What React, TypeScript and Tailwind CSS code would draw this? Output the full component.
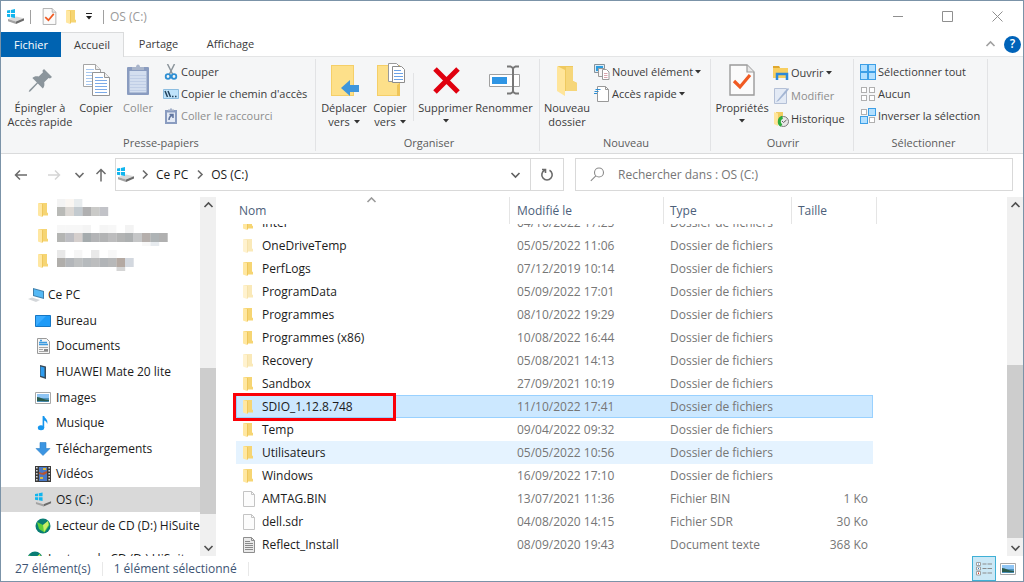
import type { ReactNode } from "react";
import clsx from "clsx";

/* ---------- icons ---------- */

function DriveIcon() {
  return (
    <svg width="18" height="16" viewBox="0 0 18 16">
      <path d="M1 10l8-2.500 8 1.700-8 3.300z" fill="#d9d9d9" />
      <path d="M9 12.500l8-3.300v2.300l-8 3.500z" fill="#6b6b6b" />
      <path d="M1 10l8 2.500V15l-8-2.700z" fill="#a3a3a3" />
      <path d="M0 1.600l3.200-.6v3.100H0zM4 .9L8 0v4.100H4zM0 5h3.200v3.200L0 7.700zM4 5h4v4l-4-.7z" fill="#12b5ee" />
    </svg>
  );
}

function FolderIcon({ faded = false }: { faded?: boolean }) {
  return (
    <svg width="12" height="16" viewBox="0 0 12 16" className={clsx("shrink-0", faded && "opacity-50")}>
      <path d="M2 1h8v9.500l1 .5v2.500H2z" fill="#f6d573" />
      <path d="M1 1l4 1v13l-4-1.500z" fill="#ffe7a1" />
      <path d="M5 2h1v12l-1 1z" fill="#efc75c" />
    </svg>
  );
}

function PageIcon({ lines = false }: { lines?: boolean }) {
  return (
    <svg width="14" height="16" viewBox="0 0 14 16" className="shrink-0">
      <path d="M1.5.5h8l3 3v12h-11z" fill={lines ? "#e9e9e9" : "#fcfcfc"} stroke={lines ? "#8e8e8e" : "#c4c4c4"} />
      <path d="M9.5.5v3h3" fill="none" stroke={lines ? "#8e8e8e" : "#c4c4c4"} />
      {lines && <path d="M3 4.500h5M3 6.500h8M3 8.500h8M3 10.500h8M3 12.500h8" stroke="#8a8a8a" />}
    </svg>
  );
}

function CheckPageIcon({ size = 16 }: { size?: number }) {
  return (
    <svg width={size} height={size} viewBox="0 0 32 32">
      <path d="M4 1h17l7 7v23H4z" fill="#fbfbfb" stroke="#9b9b9b" strokeWidth="1.4" />
      <path d="M21 1v7h7" fill="#e8e8e8" stroke="#9b9b9b" strokeWidth="1.2" />
      <path d="M8 17l6 6 10-12" fill="none" stroke="#f05a22" strokeWidth="3.2" />
    </svg>
  );
}

function PinIcon() {
  return (
    <svg width="32" height="32" viewBox="0 0 32 32" fill="#8b959c">
      <path d="M20 5l8 8-2 1.400-1.400-.5-4.400 4.300c.5 2.600.2 4.600-1.400 6.200l-5-4.900L6.500 27.200l-1.800.7.7-1.900 7.500-7.500-4.500-4.600c1.600-1.500 3.800-1.900 6.300-1.300L19 8.300l-.6-1.500z" />
    </svg>
  );
}

function CopyPagesIcon() {
  return (
    <svg width="32" height="34" viewBox="0 0 32 34">
      <path d="M3.5 1.500h12l5 5v17h-17z" fill="#fff" stroke="#a5a5a5" />
      <path d="M15.500 1.500v5h5" fill="#eee" stroke="#a5a5a5" />
      <path d="M6 6.500h8M6 9.500h8M6 12.500h6M6 15.500h6M6 18.500h6M6 21.500h6" stroke="#a8c8ef" />
      <path d="M12.500 9.500h12l5 5v18h-17z" fill="#fff" stroke="#959595" />
      <path d="M24.500 9.500v5h5" fill="#eee" stroke="#959595" />
      <path d="M15 14.500h8M15 17.500h12M15 20.500h12M15 23.500h12M15 26.500h12M15 29.500h12" stroke="#7cabe8" />
    </svg>
  );
}

function ClipboardIcon() {
  return (
    <svg width="26" height="34" viewBox="0 0 26 34">
      <rect x="2" y="4" width="22" height="28" rx="1" fill="#8a9cc0" />
      <path d="M4.500 8h17v21.500h-17z" fill="#d3deef" />
      <path d="M5 12.500h16M5 15.500h16M5 18.500h16M5 21.500h16M5 24.500h16M5 27.500h16" stroke="#c0cee6" />
      <path d="M7 7V4h4c0-3.500 4-3.500 4 0h4v3z" fill="#a9b5cb" />
    </svg>
  );
}

function ScissorsIcon() {
  return (
    <svg width="16" height="16" viewBox="0 0 16 16" fill="none">
      <path d="M4.500 0l5 10M11.500 0l-5 10" stroke="#8c959c" strokeWidth="1.5" />
      <circle cx="5" cy="12.500" r="2.300" stroke="#2f8fd3" strokeWidth="1.800" />
      <circle cx="11" cy="12.500" r="2.300" stroke="#2f8fd3" strokeWidth="1.800" />
    </svg>
  );
}

function PathIcon() {
  return (
    <svg width="16" height="16" viewBox="0 0 16 16">
      <path d="M.5 3.500h15v9H.5z" fill="#bfe3fb" stroke="#8cbde0" />
      <path d="M2 5l2.500 6M5 5l2.500 6" stroke="#23425c" strokeWidth="1.5" />
      <path d="M9 10.500h1.500M12 10.500h1.500" stroke="#23425c" strokeWidth="1.5" />
    </svg>
  );
}

function PasteLinkIcon() {
  return (
    <svg width="16" height="16" viewBox="0 0 16 16">
      <path d="M2 2h12v14H2z" fill="#8a9cc0" />
      <path d="M4 4.500h8V14H4z" fill="#e4eaf5" />
      <path d="M5 3V1.500h2C7-.2 9-.2 9 1.500h2V3z" fill="#a3afc8" />
      <path d="M6 12c0-3 1-4 3.500-5M6.500 6.500H10V10" fill="none" stroke="#60759f" strokeWidth="1.5" />
    </svg>
  );
}

function BigFolder() {
  return (
    <>
      <path d="M3 2h23v31H3z" fill="#f5cf68" />
      <path d="M4 3h21v29H4z" fill="#fde08a" />
    </>
  );
}

function MoveToIcon() {
  return (
    <svg width="32" height="34" viewBox="0 0 32 34">
      <BigFolder />
      <path d="M13 25l9-8v5h9v7h-9v4z" fill="#3f96dc" />
    </svg>
  );
}

function CopyToIcon() {
  return (
    <svg width="32" height="34" viewBox="0 0 32 34">
      <BigFolder />
      <path d="M23 22l3-2v13h-3z" fill="#efc559" />
      <path d="M14.500.5h8l3 3v15h-11z" fill="#fff" stroke="#9a9a9a" />
      <path d="M18.500 3.500h9l3 3v13h-12z" fill="#fff" stroke="#8d8d8d" />
      <path d="M20 7.500h7M20 10.500h9M20 13.500h9M20 16.500h9" stroke="#6ba2e6" />
    </svg>
  );
}

function DeleteIcon() {
  return (
    <svg width="32" height="32" viewBox="0 0 32 32">
      <path d="M5 5l23 23M28 5L5 28" stroke="#e0000f" strokeWidth="5" />
    </svg>
  );
}

function RenameIcon() {
  return (
    <svg width="34" height="32" viewBox="0 0 34 32" fill="none">
      <path d="M2.500 10.500h30v12h-30z" fill="#fff" stroke="#a0a0a0" />
      <path d="M5 13h15v7H5z" fill="#2f95e4" />
      <path d="M20 2.500h3.500L26 4l2.500-1.500H32M26 4v24M20 29.500h3.500L26 28l2.500 1.500H32" stroke="#777" strokeWidth="2" />
    </svg>
  );
}

function NewFolderIcon() {
  return (
    <svg width="26" height="34" viewBox="0 0 26 34">
      <path d="M4 3h15v15l4 2v8H8z" fill="#efc95f" />
      <path d="M12 4h7v14l4 2v8H12z" fill="#f6d67a" />
      <path d="M3 3l8 4v26l-8-5z" fill="#ffe59a" />
    </svg>
  );
}

function NewItemIcon() {
  return (
    <svg width="16" height="16" viewBox="0 0 16 16">
      <path d="M.5.5h10v8H.5z" fill="#d9edfb" stroke="#87929a" />
      <path d="M2 2h7v5H2z" fill="#2d9ddf" />
      <path d="M4.500 4.500h6v8h-6z" fill="#f6f6f6" stroke="#9a9a9a" />
      <path d="M8.500 5.500h4L15 8v7.500H8.500z" fill="#fff" stroke="#9a9a9a" />
      <path d="M10 9.500h3.500M10 11.500h3.500M10 13.500h3.500" stroke="#d9a5ae" />
    </svg>
  );
}

function EasyAccessIcon() {
  return (
    <svg width="16" height="16" viewBox="0 0 16 16">
      <path d="M3.500.5h8l3 3v12h-11z" fill="#fff" stroke="#999" />
      <path d="M11.500.5v3h3" fill="none" stroke="#999" />
      <path d="M1.500 3.500h5M.5 5.500h4M0 7.500h3" stroke="#2f8fd3" strokeWidth="1.2" />
    </svg>
  );
}

function OpenIcon() {
  return (
    <svg width="16" height="16" viewBox="0 0 16 16">
      <path d="M0 1h6l1 2h8v10H0z" fill="#f8cf61" />
      <path d="M0 1h6l1 2H0z" fill="#e0a82e" />
      <path d="M4 15V9h10v6" fill="none" stroke="#2d89d8" strokeWidth="2.5" />
    </svg>
  );
}

function EditIcon() {
  return (
    <svg width="16" height="16" viewBox="0 0 16 16">
      <path d="M1.500.5h12v15h-12z" fill="#e3eaf5" stroke="#b4c0d6" />
      <path d="M3 14l9-11 3-3 1 1-3 4-7.500 8z" fill="#a3b5d3" />
    </svg>
  );
}

function HistoryIcon() {
  return (
    <svg width="16" height="16" viewBox="0 0 16 16">
      <path d="M3 1h7v12H3z" fill="#f2cd61" />
      <path d="M1 1l4 1.500V15l-4-2z" fill="#ffe59a" />
      <circle cx="10.500" cy="10.500" r="5" fill="#e8e8e8" stroke="#7a7a7a" />
      <path d="M8.500 14.500a4.500 4.500 0 0 1 1-8.200" fill="none" stroke="#2eab3d" strokeWidth="3" />
      <path d="M9 10l1.500 1.500L13.500 9" fill="none" stroke="#666" />
    </svg>
  );
}

// Four tiles, "on" says which of them are filled
function TilesIcon({ on }: { on: boolean[] }) {
  const spots = [[0, 0], [8, 0], [0, 8], [8, 8]];
  return (
    <svg width="16" height="16" viewBox="0 0 16 16">
      {spots.map(([x, y], i) =>
        on[i] ? (
          <rect key={i} x={x + 0.5} y={y + 0.5} width="7" height="7" fill="#b3e0ff" stroke="#3d9fe6" />
        ) : (
          <rect key={i} x={x + 1.5} y={y + 1.5} width="5" height="5" fill="#fff" stroke="#b0b0b0" />
        )
      )}
    </svg>
  );
}

function PcIcon() {
  return (
    <svg width="17" height="16" viewBox="0 0 17 16">
      <path d="M5 1l11 3v8L5 9z" fill="#3f7fab" />
      <path d="M6 2.300l9 2.500v6L6 8.300z" fill="#55b9f5" />
      <path d="M0 12l4-1.500 8 2.500-4 2z" fill="#d4d7da" />
    </svg>
  );
}

function DesktopIcon() {
  return (
    <svg width="16" height="16" viewBox="0 0 16 16">
      <path d="M.5 2.500h15v11H.5z" fill="#1e9bf7" stroke="#1677c4" />
      <path d="M1 13L11 3H1z" fill="#3aacff" />
    </svg>
  );
}

function DocumentsIcon() {
  return (
    <svg width="16" height="16" viewBox="0 0 16 16">
      <path d="M2.500.5h9l3 3v12h-12z" fill="#f5f5f5" stroke="#9a9a9a" />
      <path d="M5 2.500h2M4 4.500h8M4 6.500h9" stroke="#3c9be0" strokeWidth="1.400" />
      <path d="M4 9.500h9M4 11.500h4M4 13.500h9" stroke="#a5a5a5" />
      <path d="M9 11h4v2H9z" fill="#8a8a8a" />
    </svg>
  );
}

function PhoneIcon() {
  return (
    <svg width="16" height="16" viewBox="0 0 16 16">
      <path d="M5 1l6 1.500V15l-6-2z" fill="#3b4a57" />
      <path d="M5.500 2.500l4 1V13l-4-1.200z" fill="#2f9df0" />
    </svg>
  );
}

function PictureIcon() {
  return (
    <svg width="16" height="16" viewBox="0 0 16 16">
      <path d="M.5 2.500h15v11H.5z" fill="#fff" stroke="#a8a8a8" />
      <path d="M2 4h12v4H2z" fill="#8fc5f4" />
      <path d="M2 8h12v4H2z" fill="#4f93bd" />
      <path d="M2 7c4 0 6 3 12 3v1c-5 .5-8 0-12 0z" fill="#2c5c4c" />
    </svg>
  );
}

function MusicIcon() {
  return (
    <svg width="16" height="16" viewBox="0 0 16 16" fill="#1696ee">
      <ellipse cx="6" cy="12.800" rx="3.200" ry="2.500" />
      <path d="M7.600 1h1.600c.3 2.500 4.300 3.200 3 8-.4-2-1.500-3-3-3.500V13H7.600z" />
    </svg>
  );
}

function DownloadsIcon() {
  return (
    <svg width="16" height="16" viewBox="0 0 16 16">
      <path d="M5 1.500h6v6h4l-7 7-7-7h4z" fill="#3b95e2" stroke="#2d7fc7" strokeWidth=".6" />
    </svg>
  );
}

function VideosIcon() {
  return (
    <svg width="16" height="16" viewBox="0 0 16 16">
      <path d="M0 0h16v16H0z" fill="#3a3a3a" />
      <path d="M1.800 1v15M14.200 1v15" stroke="#ddd" strokeWidth="1.5" strokeDasharray="1.5 1.5" />
      <path d="M4 1h8v14H4z" fill="#4a78c4" />
      <path d="M4 6l3 1 5-2v2l-3 2-5-1z" fill="#b8542f" />
      <path d="M8 2h3v2H8zM5 11h3v2H5z" fill="#dcb83f" />
    </svg>
  );
}

function HiSuiteIcon() {
  return (
    <svg width="16" height="16" viewBox="0 0 16 16">
      <circle cx="8" cy="8" r="7.500" fill="#0a7d74" />
      <path d="M2 4l6 3 5-4 1.500 4-5 7.500L4 11z" fill="#5fd03b" />
      <path d="M8 7l5-4 .5 4L9 14z" fill="#c9ee6a" />
    </svg>
  );
}

function Chevron({ dir, className }: { dir: "up" | "down" | "right"; className?: string }) {
  const d = dir === "up" ? "M1.500 7l4-4 4 4" : dir === "down" ? "M1.500 4l4 4 4-4" : "M4 1.500l4 4-4 4";
  return (
    <svg width="11" height="11" viewBox="0 0 11 11" className={clsx("shrink-0", className)} fill="none" stroke="currentColor" strokeWidth="1.600">
      <path d={d} />
    </svg>
  );
}

function Caret() {
  return (
    <svg width="6" height="4" viewBox="0 0 6 4" className="inline-block shrink-0 fill-[#333]">
      <path d="M0 0h6L3 3.500z" />
    </svg>
  );
}

/* ---------- ribbon ---------- */

function Group({ label, className, children }: { label: string; className: string; children: ReactNode }) {
  return (
    <section className={clsx("flex shrink-0 flex-col border-r border-[#e2e3e5]", className)}>
      <div className="flex flex-1 items-start">{children}</div>
      <h2 className="text-center text-[11px] leading-4 text-[#5c5c5c]">{label}</h2>
    </section>
  );
}

type BigProps = { icon: ReactNode; lines: string[]; className: string; caret?: boolean; disabled?: boolean };

function BigButton({ icon, lines, className, caret, disabled }: BigProps) {
  return (
    <button
      type="button"
      disabled={disabled}
      className={clsx("flex shrink-0 flex-col items-center text-[11px] leading-[14px] whitespace-nowrap", disabled ? "text-[#8d8d8d]" : "text-[#3b3b3b]", className)}
    >
      <span className="flex h-[42px] items-center">{icon}</span>
      {lines.map((line, i) => (
        <span key={line} className="flex items-center gap-1">
          {line}
          {caret && i > 0 && <Caret />}
        </span>
      ))}
      {caret && lines.length === 1 && <span className="flex h-3 items-center"><Caret /></span>}
    </button>
  );
}

function SmallButton({ icon, label, caret, disabled }: { icon: ReactNode; label: string; caret?: boolean; disabled?: boolean }) {
  return (
    <button
      type="button"
      disabled={disabled}
      className={clsx("flex h-[22px] items-center gap-[2px] text-[11px] leading-4 whitespace-nowrap", disabled ? "text-[#8d8d8d]" : "text-[#3b3b3b]")}
    >
      {icon}
      {label}
      {caret && <Caret />}
    </button>
  );
}

function Ribbon() {
  return (
    <div className="flex h-[97px] shrink-0 overflow-hidden border-b border-[#dadbdc] bg-[#f5f6f7] py-[2px]">
      <Group label="Presse-papiers" className="w-[315px] pl-[6px]">
        <BigButton icon={<PinIcon />} lines={["Épingler à", "Accès rapide"]} className="w-[66px]" />
        <BigButton icon={<CopyPagesIcon />} lines={["Copier"]} className="w-[46px]" />
        <BigButton icon={<ClipboardIcon />} lines={["Coller"]} className="w-[38px]" disabled />
        <div className="flex flex-col pt-[2px] pl-[6px]">
          <SmallButton icon={<ScissorsIcon />} label="Couper" />
          <SmallButton icon={<PathIcon />} label="Copier le chemin d'accès" />
          <SmallButton icon={<PasteLinkIcon />} label="Coller le raccourci" disabled />
        </div>
      </Group>
      <Group label="Organiser" className="w-[224px] pl-[3px]">
        <BigButton icon={<MoveToIcon />} lines={["Déplacer", "vers"]} className="w-[50px]" caret />
        <BigButton icon={<CopyToIcon />} lines={["Copier", "vers"]} className="w-[42px]" caret />
        <span className="mx-[2px] h-12 w-px self-center bg-[#e2e3e5]" />
        <BigButton icon={<DeleteIcon />} lines={["Supprimer"]} className="w-[59px]" caret />
        <BigButton icon={<RenameIcon />} lines={["Renommer"]} className="w-[58px]" />
      </Group>
      <Group label="Nouveau" className="w-[171px] pl-[2px]">
        <BigButton icon={<NewFolderIcon />} lines={["Nouveau", "dossier"]} className="w-[50px]" />
        <div className="flex flex-col pt-[2px] pl-[2px]">
          <SmallButton icon={<NewItemIcon />} label="Nouvel élément" caret />
          <SmallButton icon={<EasyAccessIcon />} label="Accès rapide" caret />
        </div>
      </Group>
      <Group label="Ouvrir" className="w-[143px] pl-[2px]">
        <BigButton icon={<CheckPageIcon size={32} />} lines={["Propriétés"]} className="w-[58px]" caret />
        <div className="flex flex-col gap-px pt-[3px] pl-[2px]">
          <SmallButton icon={<OpenIcon />} label="Ouvrir" caret />
          <SmallButton icon={<EditIcon />} label="Modifier" disabled />
          <SmallButton icon={<HistoryIcon />} label="Historique" />
        </div>
      </Group>
      <Group label="Sélectionner" className="w-[134px] pl-[6px]">
        <div className="flex flex-col pt-[2px]">
          <SmallButton icon={<TilesIcon on={[true, true, true, true]} />} label="Sélectionner tout" />
          <SmallButton icon={<TilesIcon on={[false, false, false, false]} />} label="Aucun" />
          <SmallButton icon={<TilesIcon on={[false, true, true, false]} />} label="Inverser la sélection" />
        </div>
      </Group>
    </div>
  );
}

/* ---------- panes ---------- */

function ScrollBar({ before, thumb, after }: { before: string; thumb: string; after: string }) {
  return (
    <div className="flex w-4 shrink-0 flex-col bg-[#f0f0f0] text-[#505050]">
      <button type="button" aria-label="Défiler vers le haut" className="flex h-[17px] items-center justify-center">
        <Chevron dir="up" />
      </button>
      <span className={before} />
      <span className={clsx("bg-[#cdcdcd]", thumb)} />
      <span className={after} />
      <button type="button" aria-label="Défiler vers le bas" className="flex h-[17px] items-center justify-center">
        <Chevron dir="down" />
      </button>
    </div>
  );
}

// Names hidden behind a mosaic, one colour per block
const hiddenNames = [
  {
    top: ["#f3f3f3", "#faf6f2", "#e8ecee", "#fff", "#fff", "#fff"],
    main: ["#b9bab7", "#dcd8d4", "#c3cacf", "#b0b0b1", "#cacac8", "#c2c3c8"],
    bottom: [],
  },
  {
    top: ["#f7f7f7", "#f7f7f7", "#f7f7f7", "#f4f4f4", "#fff", "#f5f5f5", "#f7f7f7", "#fff", "#f3f3f3"],
    main: ["#b4b5b3", "#bdbec3", "#d5cfcd", "#a5abad", "#b3b4b6", "#b2b3b4", "#bcbcbd", "#b3b4b4", "#adb0b1", "#c5c6c7", "#b5afac", "#aeb3b5", "#b0b0b0"],
    bottom: ["#fff", "#fff", "#fff", "#fff", "#fff", "#fff", "#fff", "#fff", "#fff", "#fff", "#f8f8f8", "#e7ebef"],
  },
  {
    top: ["#e8e8e8", "#fff", "#f6f6f6", "#fff", "#e9e9e9", "#fff", "#f8f8f8"],
    main: ["#b0aeab", "#b3b6ba", "#bec0c1", "#b6babd", "#bcbdbe", "#b1b4b7", "#b7b8b9", "#b4a9a2", "#d3d8df"],
    bottom: ["#fff", "#fff", "#fff", "#fff", "#fff", "#fff", "#fff", "#d5d5d5"],
  },
];

function Mosaic({ top, main, bottom }: { top: string[]; main: string[]; bottom: string[] }) {
  return (
    <svg width="120" height="24" viewBox="0 0 120 24">
      {top.map((c, i) => <rect key={`t${i}`} x={i * 8.5} y="1" width="8.7" height="8" fill={c} />)}
      {main.map((c, i) => <rect key={`m${i}`} x={i * 8.5} y="9" width="8.7" height="9" fill={c} />)}
      {bottom.map((c, i) => <rect key={`b${i}`} x={i * 8.5} y="18" width="8.7" height="4" fill={c} />)}
    </svg>
  );
}

const places = [
  { label: "Ce PC", icon: <PcIcon />, root: true },
  { label: "Bureau", icon: <DesktopIcon /> },
  { label: "Documents", icon: <DocumentsIcon /> },
  { label: "HUAWEI Mate 20 lite", icon: <PhoneIcon /> },
  { label: "Images", icon: <PictureIcon /> },
  { label: "Musique", icon: <MusicIcon /> },
  { label: "Téléchargements", icon: <DownloadsIcon /> },
  { label: "Vidéos", icon: <VideosIcon /> },
  { label: "OS (C:)", icon: <DriveIcon />, current: true },
  { label: "Lecteur de CD (D:) HiSuite", icon: <HiSuiteIcon /> },
];

function Sidebar() {
  return (
    <nav className="flex w-[215px] shrink-0">
      <div className="flex min-w-0 flex-1 flex-col gap-2 overflow-hidden text-[12px] leading-4 whitespace-nowrap text-[#1b1b1b]">
        <ul className="flex h-[77px] shrink-0 flex-col">
          {hiddenNames.map((name, i) => (
            <li key={i} className="flex flex-1 items-center gap-2 pl-9">
              <FolderIcon />
              <Mosaic {...name} />
            </li>
          ))}
        </ul>
        <ul className="flex h-64 shrink-0 flex-col">
          {places.map((p) => (
            <li key={p.label} className="flex flex-1">
              <a href="#" className={clsx("flex flex-1 items-center pt-px", p.root ? "gap-[3px] pl-[27px]" : "gap-1 pl-[34px]", p.current && "bg-[#d9d9d9]")}>
                <span className="flex w-[17px] shrink-0">{p.icon}</span>
                {p.label}
              </a>
            </li>
          ))}
        </ul>
        <a href="#" className="flex h-[26px] shrink-0 items-center gap-1 pl-[26px]">
          <span className="flex w-[17px] shrink-0"><HiSuiteIcon /></span>
          Lecteur de CD (D:) HiSuite
        </a>
      </div>
      <ScrollBar before="grow-[154]" thumb="grow-[146]" after="grow-[25]" />
    </nav>
  );
}

type FileRow = { name: string; date: string; type: string; size?: string; kind?: "faded" | "page" | "text"; state?: "selected" | "hover" | "cut" };

const files: FileRow[] = [
  { name: "Intel", date: "04/10/2022 17:25", type: "Dossier de fichiers", state: "cut" },
  { name: "OneDriveTemp", date: "05/05/2022 11:06", type: "Dossier de fichiers", kind: "faded" },
  { name: "PerfLogs", date: "07/12/2019 10:14", type: "Dossier de fichiers" },
  { name: "ProgramData", date: "05/09/2022 17:01", type: "Dossier de fichiers", kind: "faded" },
  { name: "Programmes", date: "08/10/2022 19:29", type: "Dossier de fichiers" },
  { name: "Programmes (x86)", date: "10/08/2022 16:44", type: "Dossier de fichiers" },
  { name: "Recovery", date: "05/08/2021 14:13", type: "Dossier de fichiers", kind: "faded" },
  { name: "Sandbox", date: "27/09/2021 10:19", type: "Dossier de fichiers" },
  { name: "SDIO_1.12.8.748", date: "11/10/2022 17:41", type: "Dossier de fichiers", state: "selected" },
  { name: "Temp", date: "09/04/2022 09:32", type: "Dossier de fichiers" },
  { name: "Utilisateurs", date: "05/05/2022 10:56", type: "Dossier de fichiers", state: "hover" },
  { name: "Windows", date: "16/09/2022 17:10", type: "Dossier de fichiers" },
  { name: "AMTAG.BIN", date: "13/07/2021 11:36", type: "Fichier BIN", size: "1 Ko", kind: "page" },
  { name: "dell.sdr", date: "04/08/2020 14:15", type: "Fichier SDR", size: "30 Ko", kind: "page" },
  { name: "Reflect_Install", date: "08/09/2020 19:43", type: "Document texte", size: "368 Ko", kind: "text" },
];

function FileTable() {
  return (
    <table className="w-[641px] table-fixed border-separate border-spacing-0 text-left text-[12px] leading-4 text-[#767676]">
      <colgroup>
        <col className="w-[274px]" />
        <col className="w-[154px]" />
        <col className="w-[128px]" />
        <col className="w-[81px]" />
        <col className="w-[4px]" />
      </colgroup>
      <thead>
        <tr className="h-[27px] text-[#4c607a]">
          <th className="relative border-r border-[#e5e5e5] pt-px pl-[3px] font-normal">
            Nom
            <Chevron dir="up" className="absolute -top-[2px] left-1/2 -ml-[7px] text-[#9a9a9a]" />
          </th>
          <th className="border-r border-[#e5e5e5] pt-px pl-[7px] font-normal">Modifié le</th>
          <th className="border-r border-[#e5e5e5] pt-px pl-[6px] font-normal">Type</th>
          <th colSpan={2} className="border-r border-[#e5e5e5] pt-px pl-[6px] font-normal">Taille</th>
        </tr>
      </thead>
      <tbody>
        {files.map((f) => {
          const selected = f.state === "selected";
          const cut = f.state === "cut";
          const cell = clsx("p-0", selected && "border-y border-[#99d1ff] bg-[#cce8ff]", f.state === "hover" && "bg-[#e5f3ff]");
          // the first row is scrolled half way under the header
          const line = clsx("flex overflow-hidden", cut ? "h-[10px] items-end" : selected ? "h-[21px] items-center pt-px" : "h-[23px] items-center pt-px");
          const inner = clsx("flex items-center", cut && "h-[23px] shrink-0");
          return (
            <tr key={f.name}>
              <td className={clsx(cell, "relative", selected && "border-l")}>
                <div className={clsx(line, selected ? "pl-[5px]" : "pl-[6px]")}>
                  <span className={clsx(inner, "text-[#1b1b1b]")}>
                    <span className="flex w-5">
                      {f.kind === "page" || f.kind === "text" ? <PageIcon lines={f.kind === "text"} /> : <FolderIcon faded={f.kind === "faded"} />}
                    </span>
                    {f.name}
                  </span>
                </div>
                {selected && <span className="absolute -top-[3px] -left-1 h-[28px] w-[163px] border-3 border-[#fb0007]" />}
              </td>
              <td className={cell}><div className={clsx(line, "pl-[7px]")}><span className={inner}>{f.date}</span></div></td>
              <td className={cell}><div className={clsx(line, "pl-[6px]")}><span className={inner}>{f.type}</span></div></td>
              <td className={clsx(cell, selected && "border-r")}><div className={clsx(line, "justify-end", selected ? "pr-1" : "pr-[5px]")}><span className={inner}>{f.size}</span></div></td>
            </tr>
          );
        })}
      </tbody>
    </table>
  );
}

/* ---------- window ---------- */

export default function App() {
  return (
    <div className="flex h-screen flex-col overflow-hidden border border-[#7b93a8] bg-white font-['Open_Sans','Noto_Sans',sans-serif] text-[12px]">
      <header className="flex h-[31px] shrink-0 items-center">
        <div className="flex items-center pl-[6px]">
          <DriveIcon />
          <span className="ml-[5px] h-[14px] w-px bg-[#a0a0a0]" />
          <button type="button" aria-label="Propriétés" className="ml-[10px]"><CheckPageIcon size={17} /></button>
          <button type="button" aria-label="Nouveau dossier" className="ml-[7px]"><FolderIcon /></button>
          <button type="button" aria-label="Personnaliser la barre" className="ml-2">
            <svg width="8" height="8" viewBox="0 0 8 8"><path d="M1 .5h6" stroke="#222" /><path d="M1 3h6L4 6.500z" fill="#222" /></svg>
          </button>
          <span className="ml-[10px] h-[14px] w-px bg-[#a0a0a0]" />
          <h1 className="ml-[6px] leading-4 text-[#9a9a9a]">OS (C:)</h1>
        </div>
        <div className="ml-auto flex text-[#8f8f8f]">
          <button type="button" aria-label="Réduire" className="flex w-[50px] justify-center">
            <svg width="12" height="12" viewBox="0 0 12 12"><path d="M1 5.500h10" stroke="currentColor" /></svg>
          </button>
          <button type="button" aria-label="Agrandir" className="flex w-[50px] justify-center">
            <svg width="12" height="12" viewBox="0 0 12 12"><path d="M.5.5h10v10H.5z" fill="none" stroke="currentColor" /></svg>
          </button>
          <button type="button" aria-label="Fermer" className="flex w-[50px] justify-center">
            <svg width="12" height="12" viewBox="0 0 12 12"><path d="M.5.5l10 10M10.500.5l-10 10" stroke="currentColor" /></svg>
          </button>
        </div>
      </header>

      <div className="flex h-[25px] shrink-0 text-[11px] leading-4 text-[#3b3b3b]">
        <button type="button" className="w-[60px] bg-[#0063b1] text-white">Fichier</button>
        <button type="button" className="w-[63px] border-t border-r border-[#dadbdc] bg-[#f5f6f7]">Accueil</button>
        <div className="flex flex-1 items-center border-b border-[#e4e5e6]">
          <button type="button" className="w-[69px]">Partage</button>
          <button type="button" className="w-[75px]">Affichage</button>
          <button type="button" aria-label="Réduire le ruban" className="ml-auto"><Chevron dir="up" className="text-[#a0a0a0]" /></button>
          <button type="button" aria-label="Aide" className="mr-[2px] ml-2 flex h-[17px] w-[17px] items-center justify-center rounded-full bg-[#0063b9] text-[12px] font-semibold text-white">?</button>
        </div>
      </div>

      <Ribbon />

      <div className="flex shrink-0 items-center pt-1 pr-[10px] pb-[6px] pl-[9px] text-[#6b6b6b]">
        <div className="flex w-[105px] shrink-0 items-center">
          <button type="button" aria-label="Précédent" className="ml-1">
            <svg width="14" height="12" viewBox="0 0 14 12" fill="none" stroke="#6b6b6b" strokeWidth="1.5"><path d="M13 6H1.500M6 1.500L1.500 6 6 10.500" /></svg>
          </button>
          <button type="button" aria-label="Suivant" className="ml-[19px]">
            <svg width="14" height="12" viewBox="0 0 14 12" fill="none" stroke="#d5d5d5" strokeWidth="1.5"><path d="M1 6h11.500M8 1.500L12.500 6 8 10.500" /></svg>
          </button>
          <button type="button" aria-label="Emplacements récents" className="ml-[13px]"><Chevron dir="down" /></button>
          <button type="button" aria-label="Dossier parent" className="ml-[10px]">
            <svg width="12" height="14" viewBox="0 0 12 14" fill="none" stroke="#6b6b6b" strokeWidth="1.5"><path d="M6 13.500V1.500M1.500 6L6 1.500 10.500 6" /></svg>
          </button>
        </div>
        <div className="flex h-[33px] w-[449px] shrink-0 border border-[#d9d9d9] leading-4 text-[#1b1b1b]">
          <div className="flex flex-1 items-center pl-px">
            <DriveIcon />
            <Chevron dir="right" className="ml-1 text-[#6b6b6b]" />
            <a href="#" className="ml-[6px]">Ce PC</a>
            <Chevron dir="right" className="ml-[6px] text-[#6b6b6b]" />
            <a href="#" className="ml-[6px]">OS (C:)</a>
            <button type="button" aria-label="Emplacements" className="mr-[9px] ml-auto text-[#5f5f5f]"><Chevron dir="down" /></button>
          </div>
          <button type="button" aria-label="Actualiser" className="flex w-[33px] items-center justify-center border-l border-[#d9d9d9]">
            <svg width="14" height="14" viewBox="0 0 14 14" fill="none" stroke="#6b6b6b" strokeWidth="1.600"><path d="M9.500 2.200a5.200 5.200 0 1 1-5 0M2 1.500h3.500V5" /></svg>
          </button>
        </div>
        <label className="ml-[11px] flex h-[33px] flex-1 items-center border border-[#d9d9d9] pl-[14px]">
          <svg width="15" height="15" viewBox="0 0 15 15" fill="none" stroke="#8a8a8a" strokeWidth="1.100"><circle cx="9" cy="5.500" r="4.500" /><path d="M5.800 8.800l-5 5" /></svg>
          <input type="text" aria-label="Rechercher" placeholder="Rechercher dans : OS (C:)" className="ml-[13px] min-w-0 flex-1 leading-4 outline-none placeholder:text-[#767676]" />
        </label>
      </div>

      <main className="flex min-h-0 flex-1">
        <Sidebar />
        <div className="min-w-0 flex-1 overflow-hidden pl-5">
          <FileTable />
        </div>
        <ScrollBar before="grow-[151]" thumb="grow-[173]" after="grow-[1]" />
      </main>

      <footer className="flex h-[25px] shrink-0 items-center pr-[7px] pl-[14px] leading-4 text-[#3d5473]">
        <span>27 élément(s)</span>
        <span className="mx-[11px] h-[14px] w-px bg-[#e8e8e8]" />
        <span>1 élément sélectionné</span>
        <span className="mx-[11px] h-[14px] w-px bg-[#e8e8e8]" />
        <button type="button" aria-label="Détails" className="ml-auto flex h-[25px] w-6 items-center justify-center border border-[#3fb0d6] bg-[#cbe8f6]">
          <svg width="16" height="14" viewBox="0 0 16 14">
            <path d="M.5.5h4v3h-4zM.5 5h4v3h-4zM.5 9.500h4v3.500h-4z" fill="#fff" stroke="#a0a0a0" />
            <path d="M2 2h1M2 6.500h1" stroke="#3a78c0" />
            <path d="M2 11.200h1" stroke="#d23b2b" strokeWidth="1.5" />
            <path d="M6.500 2h4M11.500 2H16M6.500 6.500h4M11.500 6.500H16M6.500 11h4M11.500 11H16" stroke="#8b8b8b" />
          </svg>
        </button>
        <button type="button" aria-label="Grandes icônes" className="ml-1"><PictureIcon /></button>
      </footer>
    </div>
  );
}
